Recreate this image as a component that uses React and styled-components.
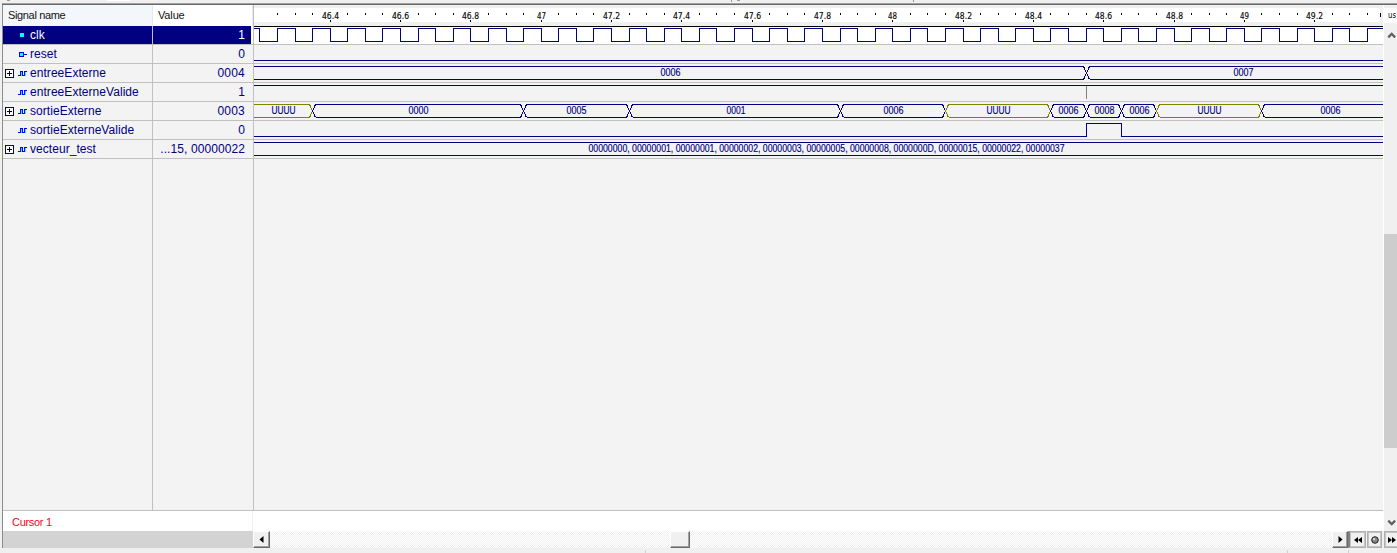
import React from "react";
import styled, { createGlobalStyle } from "styled-components";

const NAVY = "#000080";
const OLIVE = "#808000";
const LINE = "#c0c0c0";

const Global = createGlobalStyle`
  * { box-sizing: border-box; }
  body { margin: 0; background: #f0f0f0; overflow: hidden; font-family: "Liberation Sans", Arial, sans-serif; }
`;

const Window = styled.div`
  display: flex;
  flex-direction: column;
  width: 1397px;
  height: 553px;
  overflow: hidden;
`;
const TopEdge = styled.svg`display: block; flex: none;`;
const Body = styled.div`
  display: flex;
  flex: none;
  height: 526px;
`;
const LeftEdge = styled.div`
  flex: none;
  width: 3px;
  background: #f0f0f0;
  border-right: 1px solid #8c8c8c;
`;
const Main = styled.div`
  width: 1380px;
  display: flex;
  flex-direction: column;
`;
const Panes = styled.div`
  display: flex;
  height: 506px;
  background: #f3f3f3;
  border-bottom: 1px solid ${LINE};
`;
const Signals = styled.div`
  display: flex;
  flex-direction: column;
  width: 251px;
  border-right: 1px solid ${LINE};
`;
const Header = styled.div`
  display: flex;
  flex: none;
  height: 21px;
  background: linear-gradient(#fff, #f7f9fc);
`;
const HeadCell = styled.div`
  width: ${(p) => p.$w}px;
  padding-left: 5px;
  border-right: 1px solid #dfe9f7;
  font-size: 11px;
  line-height: 21px;
  letter-spacing: ${(p) => p.$ls}px;
  color: #111;
  background: ${(p) => (p.$plain ? "#fff" : "#f3f7fc")};
`;
const Row = styled.div`
  display: flex;
  flex: none;
  height: 19px;
  border-bottom: 1px solid ${LINE};
  color: ${(p) => (p.$selected ? "#fff" : NAVY)};
  background: ${(p) => (p.$selected ? `linear-gradient(90deg, ${NAVY} 248px, #fff 248px)` : "transparent")};
  font-size: 12px;
  line-height: 18px;
`;
const NameCell = styled.div`
  display: flex;
  width: 150px;
  border-right: 1px solid ${LINE};
`;
const IconBox = styled.svg`display: block; flex: none; width: 27px; height: 18px;`;
const Name = styled.span`letter-spacing: ${(p) => p.$ls}px; white-space: nowrap;`;
const ValueCell = styled.div`
  width: 100px;
  padding-right: 8px;
  text-align: right;
  letter-spacing: ${(p) => p.$ls || 0}px;
  white-space: nowrap;
`;
const Filler = styled.div`
  flex: 1;
  width: 150px;
  border-right: 1px solid ${LINE};
`;
const Wave = styled.svg`display: block; flex: none;`;
const CursorRow = styled.div`
  display: flex;
  height: 20px;
  background: #fff;
`;
const CursorLabel = styled.div`
  width: 250px;
  padding-left: 9px;
  border-right: 1px solid #f0f0f0;
  font-size: 11px;
  line-height: 22px;
  letter-spacing: -0.3px;
  color: #ff0020;
`;
const VScroll = styled.div`
  display: flex;
  flex-direction: column;
  align-items: stretch;
  width: 14px;
  margin-right: -1px;
  border-left: 1px solid #fff;
  background: #f0f0f0;
`;
const Unit = styled.svg`display: block; flex: none;`;
const Thumb = styled.div`
  height: 214px;
  margin-top: 186px;
  margin-bottom: 66px;
  background: #cdcdcd;
`;
const Bottom = styled.div`
  display: flex;
  flex: none;
  height: 17px;
  background: #f0f0f0;
`;
const BottomEdge = styled.div`
  flex: none;
  width: 3px;
  border-right: 1px solid #8c8c8c;
`;
const Gray = styled.div`flex: none; width: 250px; background: #d3d3d3;`;
const Track = styled.div`
  flex: none;
  width: ${(p) => p.$w}px;
  background: repeating-conic-gradient(#fff 0 25%, #f0f0f0 0 50%) 0 0 / 2px 2px;
`;
const Raised = styled.div`
  display: flex;
  flex: none;
  width: ${(p) => p.$w}px;
  height: 17px;
  background: #f0f0f0;
  border: solid;
  border-width: 1px;
  border-color: #fff #696969 #696969 #fff;
  box-shadow: inset -1px -1px 0 #a0a0a0;
`;
const Framed = styled.div`
  display: flex;
  flex: none;
  width: ${(p) => p.$w}px;
  height: 17px;
  margin-right: ${(p) => p.$gap || 0}px;
  background: #f0f0f0;
  border: 1px solid #b0b0b0;
  border-left: ${(p) => (p.$first ? "2px solid #808080" : "1px solid #b0b0b0")};
  box-shadow: inset 0 0 0 1px #c4c4c4;
`;
const Glyph = styled.svg`display: block; flex: none; margin: auto;`;
const Status = styled.svg`display: block; flex: none;`;

const signals = [
  { name: "clk", value: "1", icon: "port", selected: true },
  { name: "reset", value: "0", icon: "in" },
  { name: "entreeExterne", value: "0004", icon: "wave", plus: true },
  { name: "entreeExterneValide", value: "1", icon: "wave" },
  { name: "sortieExterne", value: "0003", icon: "wave", plus: true },
  { name: "sortieExterneValide", value: "0", icon: "wave" },
  { name: "vecteur_test", value: "...15, 00000022", icon: "wave", plus: true },
];

function SignalIcon({ kind, plus }) {
  return (
    <IconBox shapeRendering="crispEdges" fill="none">
      {plus && (
        <>
          <rect x="2.5" y="5.5" width="8" height="8" stroke={NAVY} fill="#fff" />
          <path d="M4 9.5h5M6.5 7v5" stroke="#000" />
        </>
      )}
      {kind === "port" && (
        <>
          <rect x="17" y="7" width="4" height="4" fill="#0ff" />
          <path d="M17 11.5h4M21 9.5h2" stroke="#0000c0" />
        </>
      )}
      {kind === "in" && (
        <>
          <rect x="16.5" y="7.5" width="4" height="4" fill="#0ff" stroke="#0000e0" />
          <path d="M21 9.5h3" stroke="#0000e0" />
        </>
      )}
      {kind === "wave" && (
        <>
          <path d="M18.5 8v4M21.5 8v4" stroke="#0ff" />
          <path d="M15 11.5h3M17.5 12V7M17 7.5h3M19.5 7v5M19 11.5h3M21.5 12V7M21 7.5h3" stroke="#0000ff" />
          <path d="M18.5 8v4M22.5 8v4" stroke="#0ff" />
        </>
      )}
    </IconBox>
  );
}

// Time scale: each half clock period is 17.58 px, origin at 46.4 us.
const X0 = 254;
const edge = (k) => Math.floor(330.2 + 17.58 * k) - X0;
const ks = Array.from({ length: 64 }, (_, i) => i - 4);

function clockPath() {
  let high = true;
  let d = "M0 23.5";
  for (const k of ks) {
    const x = edge(k) + 0.5;
    if (x > 1129) break;
    high = !high;
    d += `H${x}V${high ? 23.5 : 36.5}`;
  }
  return d + "H1129";
}

const HALF = 7;
function Segment({ top, from, to, color = NAVY, label, labelX, len }) {
  const a = from === null ? 0 : from + 0.5;
  const b = to === null ? 1129 : to + 0.5;
  const hi = top + 2.5;
  const lo = top + 15.5;
  const mid = top + 2 + HALF;
  const l = from === null ? 0 : a + 3;
  const r = to === null ? 1129 : b - 3;
  return (
    <g stroke={color} fill="none" shapeRendering="crispEdges">
      <path d={`M${l} ${hi}H${r}M${l} ${lo}H${r}`} />
      {from !== null && <path d={`M${l} ${hi}L${a} ${mid}L${l} ${lo}`} />}
      {to !== null && <path d={`M${r} ${hi}L${b} ${mid}L${r} ${lo}`} />}
      <text
        x={labelX - X0}
        y={top + 12}
        textLength={len}
        lengthAdjust="spacingAndGlyphs"
        fontSize="10"
        fill={NAVY}
        stroke={NAVY}
        strokeWidth="0.15"
        fontFamily='"Liberation Sans", Arial, sans-serif'
      >
        {label}
      </text>
    </g>
  );
}

const sortie = [
  [null, -1, "UUUU", 271.5, 24],
  [-1, 11, "0000", 408.5, 20],
  [11, 17, "0005", 566.5, 20],
  [17, 29, "0001", 726.5, 19],
  [29, 35, "0006", 883.5, 20],
  [35, 41, "UUUU", 986.5, 24],
  [41, 43, "0006", 1058.5, 20],
  [43, 45, "0008", 1094.5, 20],
  [45, 47, "0006", 1129.5, 20],
  [47, 53, "UUUU", 1197.5, 24],
  [53, null, "0006", 1320.5, 20],
];
const rowTop = (i) => 21 + 19 * i;
const scale = ["46.4", "46.6", "46.8", "47", "47.2", "47.4", "47.6", "47.8", "48", "48.2", "48.4", "48.6", "48.8", "49", "49.2"];

function WaveView() {
  const e = (k) => (k === null ? null : edge(k));
  return (
    <Wave width="1129" height="505" shapeRendering="crispEdges">
      <rect width="1129" height="21" fill="#f0f0f0" />
      <rect y="3" width="1126" height="14" fill="#fff" />
      <rect y="21" width="1129" height="18" fill="#fff" />
      <rect y="21" width="1129" height="1" fill="#000" />
      {ks.filter((k) => k > -4 && k % 4 !== 0 && k < 60).map((k) => (
        <rect key={k} x={edge(k)} y="8" width="1" height="2" fill="#000" />
      ))}
      <rect x="1126" y="8" width="1" height="4" fill="#000" />
      {scale.map((s, i) => (
        <g key={s}>
          <rect x={edge(i * 4)} y="15" width="1" height="2" fill="#000" />
          <text
            x={edge(i * 4) + (s.length > 2 ? -8 : -4)}
            y="13.5"
            fontSize="9"
            textLength={s.length > 2 ? 17 : 9}
            lengthAdjust="spacingAndGlyphs"
            stroke="#000"
            strokeWidth="0.15"
            fontFamily='"DejaVu Sans", sans-serif'
          >
            {s}
          </text>
        </g>
      ))}
      {signals.map((s, i) => (
        <rect key={s.name} y={rowTop(i) + 18} width="1129" height="1" fill={LINE} />
      ))}
      <path d={clockPath()} fill="none" stroke={NAVY} />
      <rect y={rowTop(1) + 15} width="1129" height="1" fill={NAVY} />
      <Segment top={rowTop(2)} from={null} to={e(43)} label="0006" labelX={660.5} len={20} />
      <Segment top={rowTop(2)} from={e(43)} to={null} label="0007" labelX={1233.5} len={20} />
      <rect y={rowTop(3) + 2} width="1129" height="1" fill={NAVY} />
      <rect x={edge(43)} y={rowTop(3) + 3} width="1" height="13" fill="#808080" />
      {sortie.map(([a, b, t, x, len]) => (
        <Segment key={x} top={rowTop(4)} from={e(a)} to={e(b)} color={t === "UUUU" ? OLIVE : NAVY} label={t} labelX={x} len={len} />
      ))}
      <path
        d={`M0 ${rowTop(5) + 15.5}H${edge(43) + 0.5}V${rowTop(5) + 2.5}H${edge(45) + 0.5}V${rowTop(5) + 15.5}H1129`}
        fill="none"
        stroke={NAVY}
      />
      <Segment
        top={rowTop(6)}
        from={null}
        to={null}
        label="00000000, 00000001, 00000001, 00000002, 00000003, 00000005, 00000008, 0000000D, 00000015, 00000022, 00000037"
        labelX={588.5}
        len={476}
      />
    </Wave>
  );
}

export default function App() {
  return (
    <>
      <Global />
      <Window>
        <TopEdge width="1397" height="5" shapeRendering="crispEdges">
          <rect width="1397" height="3" fill="#f0f0f0" />
          <rect x="107" width="23" height="1" fill="#fff" />
          <path d="M7 .5h3M737 .5h3" stroke="#999" />
          <path d="M731.5 0v2M913.5 0v2" stroke="#999" />
          <rect x="2" y="3" width="1395" height="1" fill="#a0a0a0" />
          <rect x="2" y="4" width="1395" height="1" fill="#696969" />
        </TopEdge>
        <Body>
          <LeftEdge />
          <Main>
            <Panes>
              <Signals>
                <Header>
                  <HeadCell $w={150} $ls={-0.35}>Signal name</HeadCell>
                  <HeadCell $w={100} $ls={-0.15} $plain>Value</HeadCell>
                </Header>
                {signals.map((s) => (
                  <Row key={s.name} $selected={s.selected}>
                    <NameCell>
                      <SignalIcon kind={s.icon} plus={s.plus} />
                      <Name $ls={0.05}>{s.name}</Name>
                    </NameCell>
                    <ValueCell $ls={s.value.length > 5 ? 0.09 : 0.2}>{s.value}</ValueCell>
                  </Row>
                ))}
                <Filler />
              </Signals>
              <WaveView />
            </Panes>
            <CursorRow>
              <CursorLabel>Cursor 1</CursorLabel>
            </CursorRow>
          </Main>
          <VScroll>
            <Unit width="13" height="43">
              <rect y="3" width="13" height="15" fill="#fff" />
              <text x="4" y="13" fontSize="8.5" fontFamily='"DejaVu Sans", sans-serif' textLength="8" lengthAdjust="spacingAndGlyphs">us</text>
              <path d="M4.3 32.4L7.7 28.8L11.1 32.4" fill="none" stroke="#606060" strokeWidth="2.3" />
            </Unit>
            <Thumb />
            <Unit width="13" height="17">
              <path d="M4.3 6.6L7.7 10.2L11.1 6.6" fill="none" stroke="#606060" strokeWidth="2.3" />
            </Unit>
          </VScroll>
        </Body>
        <Bottom>
          <BottomEdge />
          <Gray />
          <Raised $w={17}>
            <Glyph width="5" height="7"><path d="M4.5 0v7L.5 3.5z" /></Glyph>
          </Raised>
          <Track $w={400} />
          <Raised $w={20} />
          <Track $w={642} />
          <Raised $w={16}>
            <Glyph width="5" height="7"><path d="M.5 0v7L4.5 3.5z" /></Glyph>
          </Raised>
          <Framed $w={18} $gap={1} $first>
            <Glyph width="8" height="6"><path d="M4 0v6L0 3zM8 0v6L4 3z" /></Glyph>
          </Framed>
          <Framed $w={15} $gap={2}>
            <Glyph width="8" height="8">
              <circle cx="4" cy="4" r="3.3" fill="#888" stroke="#222" />
              <circle cx="3" cy="3" r="1" fill="#eee" />
            </Glyph>
          </Framed>
          <Framed $w={15}>
            <Glyph width="8" height="6"><path d="M0 0v6L4 3zM4 0v6L8 3z" /></Glyph>
          </Framed>
        </Bottom>
        <Status width="1397" height="5" shapeRendering="crispEdges">
          <path d="M645.5 2v3M1287.5 2v3M1348.5 2v3" stroke="#d0d0d0" />
        </Status>
      </Window>
    </>
  );
}
